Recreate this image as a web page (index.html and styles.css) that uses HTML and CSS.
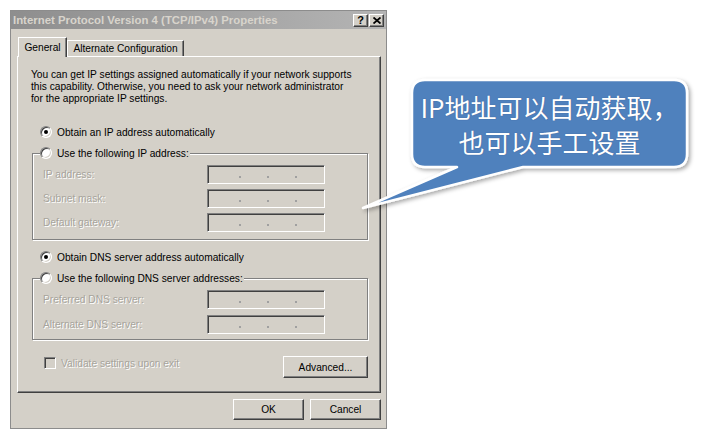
FILE: index.html
```html
<!DOCTYPE html>
<html>
<head>
<meta charset="utf-8">
<link rel="stylesheet" href="styles.css">
</head>
<body>
<div class="window">
  <div class="titlebar">
    <span class="title">Internet Protocol Version 4 (TCP/IPv4) Properties</span>
    <div class="caption-btns">
      <span class="cbtn help">?</span>
      <span class="cbtn close"><svg width="8" height="7" viewBox="0 0 8 7"><path d="M0.5 0.5 L7.5 6.5 M7.5 0.5 L0.5 6.5" stroke="#000" stroke-width="1.8"/></svg></span>
    </div>
  </div>
  <div class="client">
    <div class="tabs">
      <div class="tab active">General</div>
      <div class="tab">Alternate Configuration</div>
    </div>
    <div class="panel">
      <p class="intro">You can get IP settings assigned automatically if your network supports<br>this capability. Otherwise, you need to ask your network administrator<br>for the appropriate IP settings.</p>
      <div class="option first"><span class="radio on"></span><span>Obtain an IP address automatically</span></div>
      <div class="group">
        <div class="legend"><span class="radio"></span><span>Use the following IP address:</span></div>
        <div class="fields">
          <div class="field"><span class="lbl">IP address:</span><span class="ip"><i></i><i></i><i></i></span></div>
          <div class="field"><span class="lbl">Subnet mask:</span><span class="ip"><i></i><i></i><i></i></span></div>
          <div class="field"><span class="lbl">Default gateway:</span><span class="ip"><i></i><i></i><i></i></span></div>
        </div>
      </div>
      <div class="option dns"><span class="radio on"></span><span>Obtain DNS server address automatically</span></div>
      <div class="group group-dns">
        <div class="legend"><span class="radio"></span><span>Use the following DNS server addresses:</span></div>
        <div class="fields">
          <div class="field"><span class="lbl">Preferred DNS server:</span><span class="ip"><i></i><i></i><i></i></span></div>
          <div class="field"><span class="lbl">Alternate DNS server:</span><span class="ip"><i></i><i></i><i></i></span></div>
        </div>
      </div>
      <div class="panel-foot">
        <div class="check-row"><span class="check"></span><span class="lbl">Validate settings upon exit</span></div>
        <button class="btn adv">Advanced...</button>
      </div>
    </div>
    <div class="dialog-btns">
      <button class="btn">OK</button>
      <button class="btn">Cancel</button>
    </div>
  </div>
</div>

<svg class="callout" width="711" height="445" viewBox="0 0 711 445">
  <defs>
    <filter id="sh" x="-10%" y="-10%" width="130%" height="140%">
      <feDropShadow dx="2" dy="2" stdDeviation="2" flood-color="#000" flood-opacity="0.35"/>
    </filter>
  </defs>
  <path d="M425 80 H674 Q687 80 687 93 V154 Q687 167 674 167 H523 L363 208 L457 167 H425 Q412 167 412 154 V93 Q412 80 425 80 Z" fill="#4f81bd" stroke="#fff" stroke-width="2.5" stroke-linejoin="round" filter="url(#sh)"/>
</svg>
<div class="callout-text">
  <span>IP地址可以自动获取，</span>
  <span>也可以手工设置</span>
</div>
</body>
</html>
```

FILE: styles.css
```css
html, body {
  margin: 0;
  padding: 0;
}
body {
  width: 711px;
  height: 445px;
  background: #fff;
  position: relative;
  overflow: hidden;
  font-family: "Liberation Sans", Arial, sans-serif;
  font-size: 10.2px;
  color: #000;
}
.window {
  box-sizing: border-box;
  margin: 10px 0 0 10px;
  width: 377px;
  height: 419px;
  border: 1px solid #8c8c8c;
  background: #d4d0c8;
  display: flex;
  flex-direction: column;
}
.titlebar {
  height: 18px;
  flex: none;
  display: flex;
  align-items: center;
  justify-content: space-between;
  padding: 0 2px 0 2px;
  background: linear-gradient(to right, #8e8e8e, #b4b4b4);
}
.title {
  color: #d8d4cc;
  font-weight: bold;
  font-size: 11.4px;
  white-space: nowrap;
}
.caption-btns {
  display: flex;
  gap: 1px;
}
.cbtn {
  box-sizing: border-box;
  width: 15px;
  height: 13px;
  background: #d4d0c8;
  border: 1px solid;
  border-color: #fff #404040 #404040 #fff;
  box-shadow: inset -1px -1px 0 #808080;
  display: flex;
  align-items: center;
  justify-content: center;
  font-weight: bold;
  font-size: 11px;
  line-height: 1;
}
.client {
  flex: 1;
  padding: 8px 5px 0 6px;
  display: flex;
  flex-direction: column;
}
.tabs {
  display: flex;
  height: 19px;
  align-items: flex-end;
  position: relative;
  z-index: 1;
}
.tab {
  box-sizing: border-box;
  height: 16px;
  width: 117px;
  border: 1px solid;
  border-bottom: none;
  border-color: #fff #404040 #404040 #fff;
  box-shadow: inset -1px 0 0 #808080;
  display: flex;
  align-items: center;
  justify-content: center;
  white-space: nowrap;
  background: #d4d0c8;
}
.tab.active {
  height: 20px;
  width: 49px;
  margin-left: 1px;
  margin-bottom: -1px;
  padding-bottom: 1px;
}
.panel {
  box-sizing: border-box;
  width: 364px;
  height: 337px;
  border: 1px solid;
  border-color: #fff #404040 #404040 #fff;
  box-shadow: inset -1px -1px 0 #808080;
  padding-top: 12px;
  display: flex;
  flex-direction: column;
}
.intro {
  margin: 0;
  padding-left: 13px;
  line-height: 12px;
  white-space: nowrap;
}
.option {
  display: flex;
  align-items: center;
  height: 14px;
  margin-left: 22px;
  gap: 5px;
  white-space: nowrap;
}
.option.first {
  margin-top: 20px;
}
.option.dns {
  margin-top: 10px;
}
.radio {
  box-sizing: border-box;
  width: 12px;
  height: 12px;
  border-radius: 50%;
  border: 1px solid;
  border-color: #808080 #fff #fff #808080;
  box-shadow: inset 1px 1px 0 #404040, inset -1px -1px 0 #d4d0c8;
  background: #fff;
  display: flex;
  align-items: center;
  justify-content: center;
  flex: none;
}
.radio.on::after {
  content: "";
  width: 4px;
  height: 4px;
  border-radius: 50%;
  background: #000;
}
.group {
  box-sizing: border-box;
  width: 336px;
  margin: 14px 0 0 14px;
  border: 1px solid #808080;
  box-shadow: inset 1px 1px 0 #fff, 1px 1px 0 #fff;
  padding-bottom: 7px;
}
.group-dns {
  padding-bottom: 5px;
}
.group-dns .fields {
  gap: 6px;
}
.legend {
  display: flex;
  align-items: center;
  gap: 5px;
  width: max-content;
  height: 14px;
  margin: -8px 0 0 7px;
  padding-right: 1px;
  background: #d4d0c8;
  white-space: nowrap;
}
.fields {
  margin-top: 5px;
  display: flex;
  flex-direction: column;
  gap: 5px;
}
.field {
  display: grid;
  grid-template-columns: 164px 118px;
  padding-left: 10px;
  align-items: center;
}
.lbl {
  color: #a7a49c;
  text-shadow: 1px 1px 0 #fff;
  white-space: nowrap;
}
.ip {
  box-sizing: border-box;
  height: 19px;
  border: 1px solid;
  border-color: #808080 #fff #fff #808080;
  box-shadow: inset 1px 1px 0 #404040, inset -1px -1px 0 #d4d0c8;
  display: flex;
  align-items: flex-end;
  padding: 0 0 5px 31px;
  gap: 26px;
}
.ip i {
  width: 2px;
  height: 2px;
  background: #a0a0a0;
}
.panel-foot {
  display: flex;
  justify-content: space-between;
  align-items: flex-start;
  margin: 16px 12px 0 26px;
}
.check-row {
  display: flex;
  align-items: center;
  gap: 5px;
  margin-top: 1px;
}
.check {
  box-sizing: border-box;
  width: 12px;
  height: 12px;
  border: 1px solid;
  border-color: #808080 #fff #fff #808080;
  box-shadow: inset 1px 1px 0 #404040, inset -1px -1px 0 #d4d0c8;
  background: #d4d0c8;
}
.btn {
  box-sizing: border-box;
  height: 21px;
  width: 71px;
  padding: 0;
  margin: 0;
  font-family: inherit;
  font-size: 10.2px;
  color: #000;
  background: #d4d0c8;
  border: 1px solid;
  border-color: #fff #404040 #404040 #fff;
  box-shadow: inset -1px -1px 0 #808080;
  border-radius: 0;
}
.btn.adv {
  width: 85px;
  height: 22px;
}
.dialog-btns {
  display: flex;
  justify-content: flex-end;
  gap: 6px;
  margin-top: 6px;
  width: 364px;
}
.callout {
  position: absolute;
  left: 0;
  top: 0;
}
.callout-text {
  position: absolute;
  left: 412px;
  top: 80px;
  width: 275px;
  height: 87px;
  display: flex;
  flex-direction: column;
  align-items: center;
  justify-content: center;
  color: #fff;
  font-family: "Noto Sans CJK SC", "Noto Sans", sans-serif;
  font-size: 26px;
  line-height: 35px;
  white-space: nowrap;
  text-shadow: 0 0 1px rgba(40, 60, 110, 0.6);
}
```
